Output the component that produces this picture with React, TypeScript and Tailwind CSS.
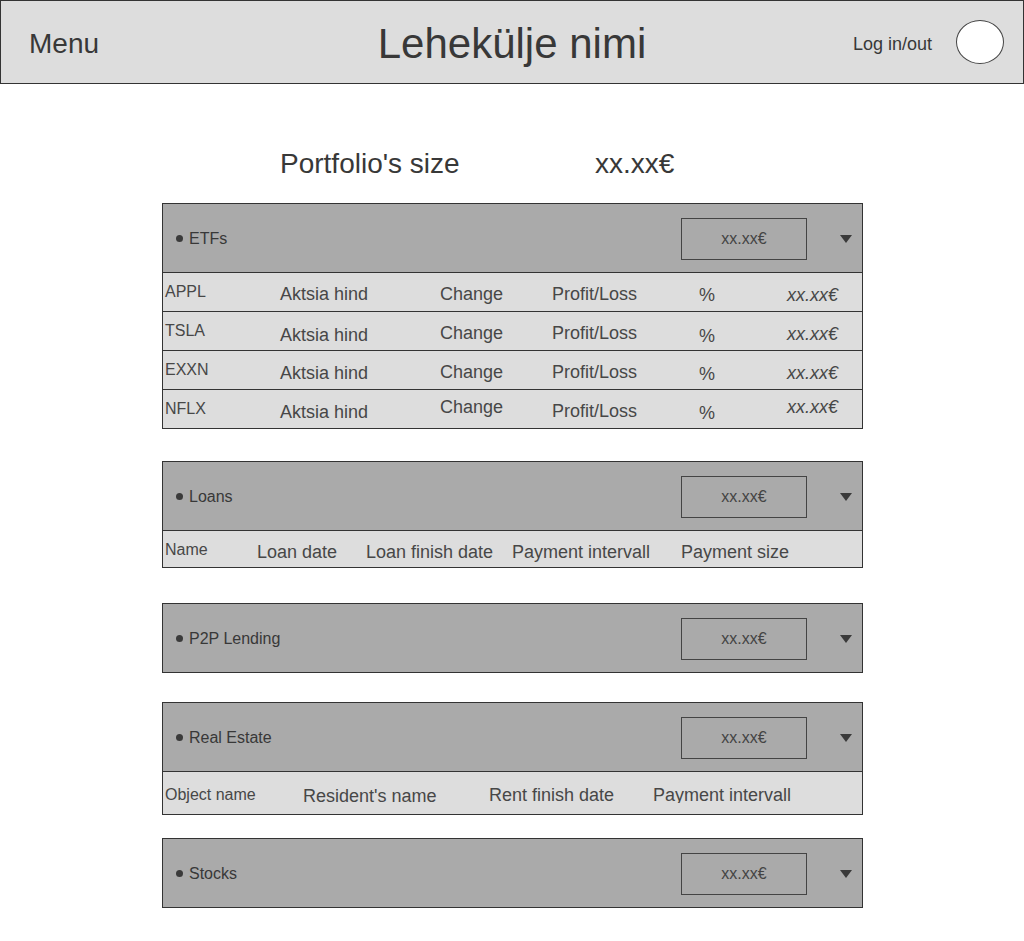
import React from "react";

type Cell = { text: string; w?: number; pt: number; size: 16 | 18; italic?: boolean; clip?: number };

function Row({ cells, h }: { cells: Cell[]; h: number }) {
  return (
    <div className="flex border-t border-[#333333] bg-[#dddddd]" style={{ height: h }}>
      <div className="w-[2px] shrink-0" />
      {cells.map((c, i) => (
        <div
          key={i}
          className={`shrink-0 whitespace-nowrap text-[#474747] ${c.size === 16 ? "text-[16px] leading-[18px]" : "text-[18px] leading-[20px]"} ${c.italic ? "italic" : ""} ${c.clip ? "overflow-hidden" : ""}`}
          style={{ width: c.w ?? undefined, paddingTop: c.pt + 1, height: c.clip ?? undefined }}
        >
          {c.text}
        </div>
      ))}
    </div>
  );
}

function SectionHeader({ label }: { label: string }) {
  return (
    <div className="flex h-[68px] items-center bg-[#aaaaaa] pl-[13px] pr-[10px]">
      <span className="mt-[1px] h-[7px] w-[7px] rounded-full bg-[#3a3a3a]" />
      <span className="ml-[6px] mt-[2px] text-[16px] leading-[18px] text-[#383838]">{label}</span>
      <div className="flex-1" />
      <div className="mt-[1px] flex h-[42px] w-[126px] items-center justify-center border border-[#444444] pt-[1px] text-[16px] text-[#444444]">
        xx.xx€
      </div>
      <svg className="ml-[33px] mt-[1px]" width="12" height="8" viewBox="0 0 12 8">
        <polygon points="0,0 12,0 6,8" fill="#3a3a3a" />
      </svg>
    </div>
  );
}

function Section({ label, children, mt }: { label: string; children?: React.ReactNode; mt: string }) {
  return (
    <div className={`${mt} w-[701px] border border-[#333333]`}>
      <SectionHeader label={label} />
      {children}
    </div>
  );
}

const etfW = [115, 160, 112, 147, 88];
const etfRows: { name: string; pts: number[] }[] = [
  { name: "APPL", pts: [9, 10, 10, 10, 11, 11] },
  { name: "TSLA", pts: [9, 12, 10, 10, 13, 11] },
  { name: "EXXN", pts: [9, 11, 10, 10, 12, 11] },
  { name: "NFLX", pts: [9, 11, 6, 10, 12, 6] },
];

export default function App() {
  return (
    <div className="min-h-[941px] w-[1024px] bg-white" style={{ fontFamily: '"Liberation Sans", Arial, sans-serif' }}>
      <header className="grid h-[84px] grid-cols-[1fr_auto_1fr] items-center border border-[#333333] bg-[#dddddd] pt-[4px]">
        <div className="pl-[28px] text-[28px] text-[#383838]">Menu</div>
        <div className="text-[42px] leading-[48px] text-[#383838]">Lehekülje nimi</div>
        <div className="flex items-center justify-end pr-[19px]">
          <span className="text-[18px] text-[#383838]">Log in/out</span>
          <span className="-mt-[4px] ml-[24px] h-[44px] w-[48px] rounded-[50%] border border-[#444444] bg-white" />
        </div>
      </header>

      <main className="ml-[162px] flex flex-col">
        <div className="mt-[64px] flex h-[32px] items-center pl-[118px] text-[28px] leading-[32px] text-[#383838]">
          <span className="w-[315px]">Portfolio's size</span>
          <span>xx.xx€</span>
        </div>

        <Section label="ETFs" mt="mt-[23px]">
          {etfRows.map((r) => (
            <Row
              key={r.name}
              h={39}
              cells={[
                { text: r.name, w: etfW[0], pt: r.pts[0], size: 16 },
                { text: "Aktsia hind", w: etfW[1], pt: r.pts[1], size: 18 },
                { text: "Change", w: etfW[2], pt: r.pts[2], size: 18 },
                { text: "Profit/Loss", w: etfW[3], pt: r.pts[3], size: 18 },
                { text: "%", w: etfW[4], pt: r.pts[4], size: 18 },
                { text: "xx.xx€", pt: r.pts[5], size: 18, italic: true },
              ]}
            />
          ))}
        </Section>

        <Section label="Loans" mt="mt-[32px]">
          <Row
            h={37}
            cells={[
              { text: "Name", w: 92, pt: 9, size: 16 },
              { text: "Loan date", w: 109, pt: 10, size: 18 },
              { text: "Loan finish date", w: 146, pt: 10, size: 18 },
              { text: "Payment intervall", w: 169, pt: 10, size: 18 },
              { text: "Payment size", pt: 10, size: 18 },
            ]}
          />
        </Section>

        <Section label="P2P Lending" mt="mt-[35px]" />

        <Section label="Real Estate" mt="mt-[29px]">
          <Row
            h={43}
            cells={[
              { text: "Object name", w: 138, pt: 13, size: 16 },
              { text: "Resident's name", w: 186, pt: 13, size: 18 },
              { text: "Rent finish date", w: 164, pt: 12, size: 18 },
              { text: "Payment intervall", pt: 12, size: 18, clip: 31 },
            ]}
          />
        </Section>

        <Section label="Stocks" mt="mt-[23px]" />
      </main>
    </div>
  );
}
